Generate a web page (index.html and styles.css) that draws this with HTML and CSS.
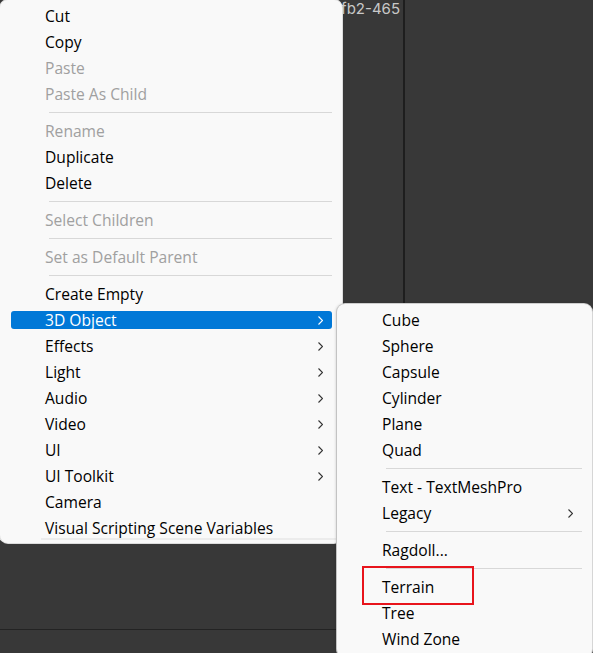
FILE: index.html
```html
<!DOCTYPE html>
<html>
<head>
<meta charset="utf-8">
<link rel="stylesheet" href="styles.css">
</head>
<body>
<div class="scene">
  <div class="top">
    <div class="pane-left"><span class="guid">4cfb2-465</span></div>
    <div class="vdiv"></div>
    <div class="pane-right"></div>
  </div>
  <div class="hline"></div>
  <div class="bottom"></div>
</div>

<div class="menu main">
  <div class="item">Cut</div>
  <div class="item">Copy</div>
  <div class="item disabled">Paste</div>
  <div class="item disabled">Paste As Child</div>
  <div class="sep"></div>
  <div class="item disabled">Rename</div>
  <div class="item">Duplicate</div>
  <div class="item">Delete</div>
  <div class="sep"></div>
  <div class="item disabled">Select Children</div>
  <div class="sep"></div>
  <div class="item disabled">Set as Default Parent</div>
  <div class="sep"></div>
  <div class="item">Create Empty</div>
  <div class="item active">3D Object<svg class="arrow" viewBox="0 0 5 9"><polyline points="0.5,0.5 4.5,4.5 0.5,8.5"/></svg></div>
  <div class="item">Effects<svg class="arrow" viewBox="0 0 5 9"><polyline points="0.5,0.5 4.5,4.5 0.5,8.5"/></svg></div>
  <div class="item">Light<svg class="arrow" viewBox="0 0 5 9"><polyline points="0.5,0.5 4.5,4.5 0.5,8.5"/></svg></div>
  <div class="item">Audio<svg class="arrow" viewBox="0 0 5 9"><polyline points="0.5,0.5 4.5,4.5 0.5,8.5"/></svg></div>
  <div class="item">Video<svg class="arrow" viewBox="0 0 5 9"><polyline points="0.5,0.5 4.5,4.5 0.5,8.5"/></svg></div>
  <div class="item">UI<svg class="arrow" viewBox="0 0 5 9"><polyline points="0.5,0.5 4.5,4.5 0.5,8.5"/></svg></div>
  <div class="item">UI Toolkit<svg class="arrow" viewBox="0 0 5 9"><polyline points="0.5,0.5 4.5,4.5 0.5,8.5"/></svg></div>
  <div class="item">Camera</div>
  <div class="item">Visual Scripting Scene Variables</div>
</div>

<div class="menu sub">
  <div class="item">Cube</div>
  <div class="item">Sphere</div>
  <div class="item">Capsule</div>
  <div class="item">Cylinder</div>
  <div class="item">Plane</div>
  <div class="item">Quad</div>
  <div class="sep"></div>
  <div class="item">Text - TextMeshPro</div>
  <div class="item">Legacy<svg class="arrow" viewBox="0 0 5 9"><polyline points="0.5,0.5 4.5,4.5 0.5,8.5"/></svg></div>
  <div class="sep"></div>
  <div class="item">Ragdoll...</div>
  <div class="sep"></div>
  <div class="item">Terrain</div>
  <div class="item">Tree</div>
  <div class="item">Wind Zone</div>
</div>

<div class="mark"></div>
</body>
</html>
```
FILE: styles.css
```css
html, body {
  margin: 0;
  padding: 0;
}
body {
  width: 593px;
  height: 653px;
  overflow: hidden;
  position: relative;
  background: #383838;
  font-family: "Open Sans", "Noto Sans", sans-serif;
}
.scene {
  display: flex;
  flex-direction: column;
  height: 653px;
}
.top {
  display: flex;
  height: 629px;
}
.pane-left {
  width: 403px;
  display: flex;
  justify-content: flex-end;
  align-items: flex-start;
  padding-right: 3px;
  box-sizing: border-box;
}
.guid {
  font-family: "Inter", "Roboto", sans-serif;
  font-size: 15px;
  color: #c8c8c8;
  line-height: 17px;
  margin-top: 0px;
  white-space: nowrap;
}
.vdiv {
  width: 2px;
  background: #1e1e1e;
}
.pane-right {
  flex: 1;
}
.hline {
  height: 1px;
  background: #232323;
}
.bottom {
  flex: 1;
}

.menu {
  position: absolute;
  background: #f9f9f9;
  border-radius: 8px;
  display: flex;
  flex-direction: column;
  gap: 8px;
  box-sizing: border-box;
  font-size: 15.6px;
  color: #000;
}
.main {
  left: 0;
  top: 0;
  width: 342px;
  height: 543px;
  padding: 7px 0 6px;
  box-shadow: 0 0 0 1px #dcdcdc;
}
.main::after {
  content: "";
  position: absolute;
  left: 41px;
  right: 5px;
  bottom: 3px;
  height: 2px;
  background: #ececec;
}
.sub {
  left: 337px;
  top: 304px;
  width: 255px;
  height: 353px;
  padding: 7px 0 6px;
  box-shadow: -1px 0 3px rgba(0,0,0,0.18), 0 0 0 1px #dcdcdc;
}
.item {
  height: 18px;
  line-height: 18px;
  margin: 0 10px 0 11px;
  padding: 0 9px 0 34px;
  border-radius: 3px;
  display: flex;
  align-items: center;
  justify-content: space-between;
  white-space: nowrap;
}
.item.disabled {
  color: #a0a0a0;
}
.item.active {
  background: #0078d7;
  color: #fff;
}
.arrow {
  width: 5px;
  height: 9px;
  fill: none;
  stroke: #333;
  stroke-width: 1.1;
}
.active .arrow {
  stroke: #fff;
}
.sep {
  height: 1px;
  margin: 1px 10px 1px 49px;
  background: #d8d8d8;
}
.mark {
  position: absolute;
  left: 362px;
  top: 566px;
  width: 108px;
  height: 35px;
  border: 2px solid #e8141c;
}
```
